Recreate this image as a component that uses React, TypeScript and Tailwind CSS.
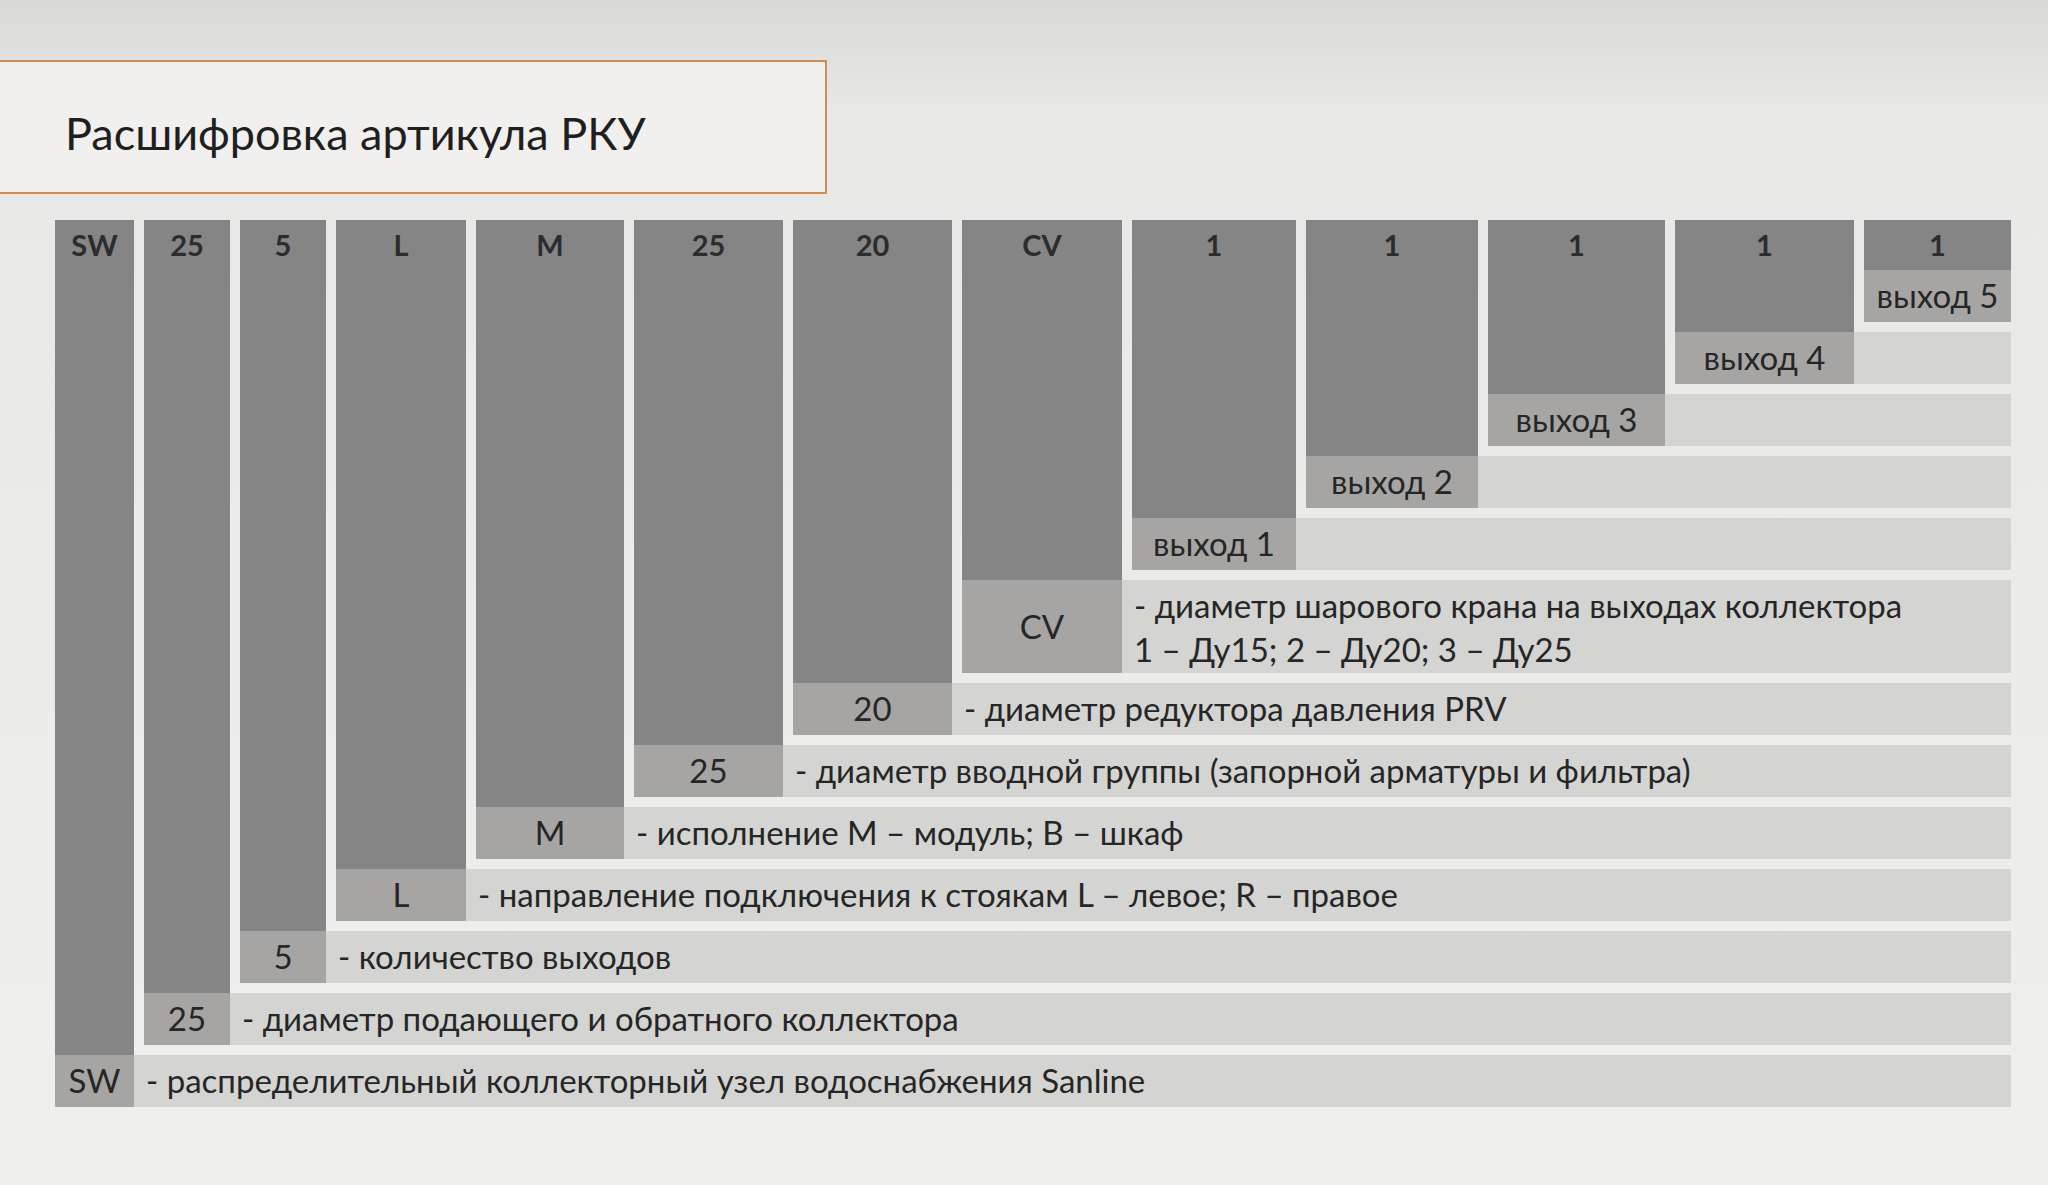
import React from "react";

type Col = {
  head: string;
  cell: string;
  w: string;
  hh: string;
  desc?: React.ReactNode;
};

const cols: Col[] = [
  { head: "SW", cell: "SW", w: "w-[79px]", hh: "h-[52px]", desc: "- распределительный коллекторный узел водоснабжения Sanline" },
  { head: "25", cell: "25", w: "w-[86px]", hh: "h-[52px]", desc: "- диаметр подающего и обратного коллектора" },
  { head: "5", cell: "5", w: "w-[86px]", hh: "h-[52px]", desc: "- количество выходов" },
  { head: "L", cell: "L", w: "w-[130px]", hh: "h-[52px]", desc: "- направление подключения к стоякам L – левое; R – правое" },
  { head: "M", cell: "M", w: "w-[148px]", hh: "h-[52px]", desc: "- исполнение М – модуль; В – шкаф" },
  { head: "25", cell: "25", w: "w-[149px]", hh: "h-[52px]", desc: "- диаметр вводной группы (запорной арматуры и фильтра)" },
  { head: "20", cell: "20", w: "w-[159px]", hh: "h-[52px]", desc: "- диаметр редуктора давления PRV" },
  {
    head: "CV",
    cell: "CV",
    w: "w-[160px]",
    hh: "h-[93px]",
    desc: (
      <div className="flex flex-col leading-[44px]">
        <span>- диаметр шарового крана на выходах коллектора</span>
        <span>1 – Ду15; 2 – Ду20; 3 – Ду25</span>
      </div>
    ),
  },
  { head: "1", cell: "выход 1", w: "w-[164px]", hh: "h-[52px]", desc: "" },
  { head: "1", cell: "выход 2", w: "w-[172px]", hh: "h-[52px]", desc: "" },
  { head: "1", cell: "выход 3", w: "w-[177px]", hh: "h-[52px]", desc: "" },
  { head: "1", cell: "выход 4", w: "w-[179px]", hh: "h-[52px]", desc: "" },
  { head: "1", cell: "выход 5", w: "w-[147px]", hh: "h-[52px]" },
];

function Block({ i }: { i: number }) {
  const c = cols[i];
  const last = i === cols.length - 1;
  const column = (
    <div className={`flex shrink-0 flex-col ${c.w}`}>
      <div className="flex-1 bg-[#858585]">
        <div className="flex h-[50px] items-center justify-center text-[29px] font-bold text-[#2c2c2c]">
          {c.head}
        </div>
      </div>
      <div className={`flex ${c.hh} items-center justify-center whitespace-nowrap bg-[#a6a5a3] text-[33px] text-[#262626]`}>
        {c.cell}
      </div>
    </div>
  );
  if (last) return column;
  return (
    <div className="flex">
      {column}
      <div className="flex flex-1 flex-col">
        <div className="flex flex-1">
          <div className="w-[10px] shrink-0" />
          <div className="flex-1">
            <Block i={i + 1} />
          </div>
        </div>
        <div className="h-[10px] shrink-0" />
        <div className={`flex ${c.hh} shrink-0 items-center whitespace-nowrap bg-[#d4d4d2] pl-[12px] text-[33px] text-[#262626]`}>
          {c.desc}
        </div>
      </div>
    </div>
  );
}

export default function App() {
  return (
    <div
      className="h-[1185px] w-[2048px] overflow-hidden bg-[linear-gradient(to_bottom,#d9d9d7_0px,#e8e8e6_110px,#efefed_100%)]"
      style={{ fontFamily: "Lato, 'Open Sans', sans-serif" }}
    >
      <div className="pt-[60px]">
        <div className="flex h-[134px] w-[827px] items-center border-2 border-l-0 border-[#d38c52] bg-[#f1f0ee] pl-[65px] pt-[14px]">
          <h1 className="text-[45px] text-[#1f1f1f]">Расшифровка артикула РКУ</h1>
        </div>
      </div>
      <div className="ml-[55px] mt-[26px] w-[1956px]">
        <Block i={0} />
      </div>
    </div>
  );
}
